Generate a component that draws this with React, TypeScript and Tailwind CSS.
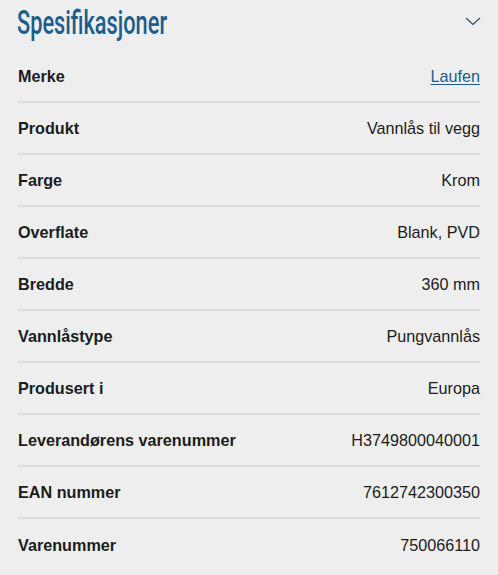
const rows: [string, string][] = [
  ["Merke", "Laufen"],
  ["Produkt", "Vannlås til vegg"],
  ["Farge", "Krom"],
  ["Overflate", "Blank, PVD"],
  ["Bredde", "360 mm"],
  ["Vannlåstype", "Pungvannlås"],
  ["Produsert i", "Europa"],
  ["Leverandørens varenummer", "H3749800040001"],
  ["EAN nummer", "7612742300350"],
  ["Varenummer", "750066110"],
]

export default function App() {
  return (
    <div className="w-[498px] h-[575px] bg-[#eeeeee] px-[18px] overflow-hidden font-['Liberation_Sans',Arial,sans-serif]">
      <div className="flex h-[51px] items-center justify-between">
        <h2 className="inline-block origin-left scale-x-[0.68] scale-y-[1.06] text-[32px] leading-none font-medium text-[#1b5d8c] font-['Roboto',sans-serif] -mt-[8px] -ml-[1px] whitespace-nowrap">
          Spesifikasjoner
        </h2>
        <svg width="16" height="9" viewBox="0 0 16 9" className="-mr-[1px] -mt-[8px]">
          <path d="M1 1 L8 7.5 L15 1" fill="none" stroke="#2a4f6e" strokeWidth="1.2" />
        </svg>
      </div>
      {rows.map(([k, v], i) => (
        <div
          key={k}
          className={`flex h-[52px] items-center justify-between text-[16.2px] text-[#1c1c1c] ${i < rows.length - 1 ? "border-b-2 border-[#dcdcdc]" : ""}`}
        >
          <span className="font-bold">{k}</span>
          {i === 0 ? (
            <a className="text-[#1b5d8c] underline underline-offset-2">{v}</a>
          ) : (
            <span>{v}</span>
          )}
        </div>
      ))}
    </div>
  )
}
